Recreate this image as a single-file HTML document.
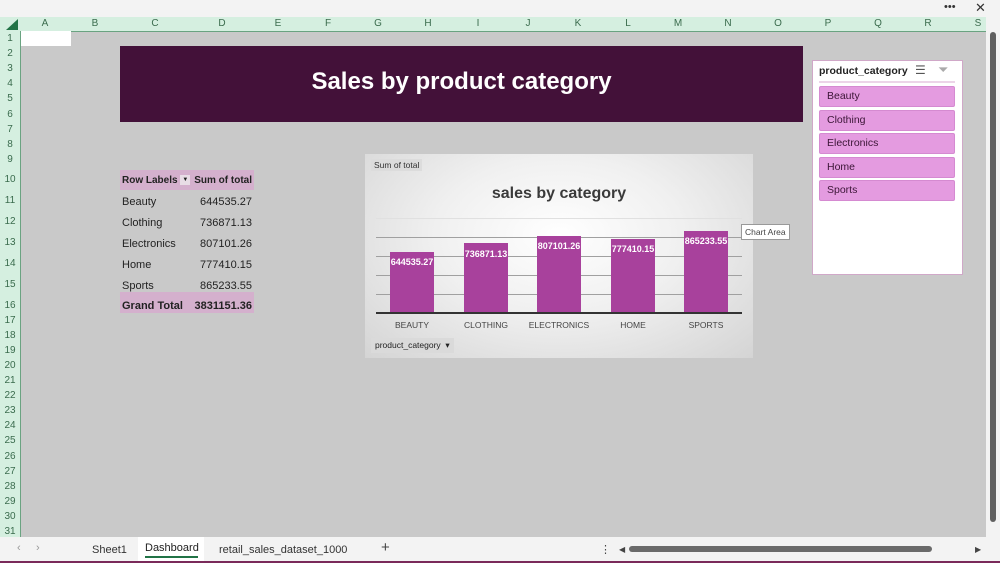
<!DOCTYPE html><html><head><style>
body{margin:0;width:1000px;height:563px;overflow:hidden;background:#c9c9c9;font-family:"Liberation Sans",sans-serif;position:relative}
.a{position:absolute}
.ch{position:absolute;top:17px;height:14px;font-size:10px;color:#3a6b4d;text-align:center;line-height:14px}
.rh{position:absolute;left:0;width:20px;font-size:10px;color:#3a6b4d;text-align:center}
.pv{position:absolute;left:122px;font-size:11px;color:#222;width:130px;display:flex;justify-content:space-between;white-space:nowrap}
.bar{position:absolute;background:#a8419c;width:44px;color:#fff;font-size:9px;font-weight:bold;text-align:center}
.xl{position:absolute;top:320px;font-size:8.5px;color:#444;width:80px;text-align:center}
.gl{position:absolute;left:376px;width:366px;height:1px;background:#a0a0a0}
.si{position:absolute;left:819px;width:127px;height:19px;background:#e49be0;border:1px solid #d58ad1;border-radius:2px;font-size:10.5px;color:#3b1536;padding-left:7px;line-height:19px}
</style></head><body>
<div class="a" style="left:0;top:0;width:1000px;height:17px;background:#f3f3f3"></div>
<div class="a" style="left:944px;top:1px;font-size:11px;color:#333">•••</div>
<div class="a" style="left:975px;top:0;font-size:13px;color:#333">✕</div>
<div class="a" style="left:0;top:17px;width:986px;height:14px;background:#d5efe0;border-bottom:1px solid #6aa381"></div>
<div class="a" style="left:0;top:31px;width:20px;height:506px;background:#d5efe0;border-right:1px solid #6aa381"></div>
<div class="a" style="left:6px;top:19px;width:0;height:0;border-left:12px solid transparent;border-bottom:11px solid #217346"></div>
<div class="ch" style="left:20px;width:50px">A</div><div class="ch" style="left:70px;width:50px">B</div><div class="ch" style="left:120px;width:70px">C</div><div class="ch" style="left:190px;width:64px">D</div><div class="ch" style="left:253px;width:50px">E</div><div class="ch" style="left:303px;width:50px">F</div><div class="ch" style="left:353px;width:50px">G</div><div class="ch" style="left:403px;width:50px">H</div><div class="ch" style="left:453px;width:50px">I</div><div class="ch" style="left:503px;width:50px">J</div><div class="ch" style="left:553px;width:50px">K</div><div class="ch" style="left:603px;width:50px">L</div><div class="ch" style="left:653px;width:50px">M</div><div class="ch" style="left:703px;width:50px">N</div><div class="ch" style="left:753px;width:50px">O</div><div class="ch" style="left:803px;width:50px">P</div><div class="ch" style="left:853px;width:50px">Q</div><div class="ch" style="left:903px;width:50px">R</div><div class="ch" style="left:953px;width:50px">S</div>
<div class="rh" style="top:33px">1</div><div class="rh" style="top:48px">2</div><div class="rh" style="top:63px">3</div><div class="rh" style="top:78px">4</div><div class="rh" style="top:93px">5</div><div class="rh" style="top:109px">6</div><div class="rh" style="top:124px">7</div><div class="rh" style="top:139px">8</div><div class="rh" style="top:154px">9</div><div class="rh" style="top:174px">10</div><div class="rh" style="top:195px">11</div><div class="rh" style="top:216px">12</div><div class="rh" style="top:237px">13</div><div class="rh" style="top:258px">14</div><div class="rh" style="top:279px">15</div><div class="rh" style="top:300px">16</div><div class="rh" style="top:315px">17</div><div class="rh" style="top:330px">18</div><div class="rh" style="top:345px">19</div><div class="rh" style="top:360px">20</div><div class="rh" style="top:375px">21</div><div class="rh" style="top:390px">22</div><div class="rh" style="top:405px">23</div><div class="rh" style="top:420px">24</div><div class="rh" style="top:435px">25</div><div class="rh" style="top:451px">26</div><div class="rh" style="top:466px">27</div><div class="rh" style="top:481px">28</div><div class="rh" style="top:496px">29</div><div class="rh" style="top:511px">30</div><div class="rh" style="top:526px">31</div>
<div class="a" style="left:21px;top:31px;width:50px;height:15px;background:#fff"></div>
<div class="a" style="left:986px;top:17px;width:14px;height:520px;background:#f3f3f3"></div>
<div class="a" style="left:990px;top:32px;width:6px;height:490px;background:#606060;border-radius:3px"></div>
<div class="a" style="left:120px;top:46px;width:683px;height:76px;background:#431139;color:#fff;font-size:24px;font-weight:bold;text-align:center;line-height:72px">Sales by product category</div>
<div class="a" style="left:120px;top:170px;width:134px;height:20px;background:#d4b0cd"></div>
<div class="a" style="left:120px;top:292px;width:134px;height:21px;background:#d4b0cd"></div>
<div class="pv" style="top:175px;font-weight:bold;font-size:10px"><span>Row Labels <span style="display:inline-block;width:10px;height:10px;background:#e8dde6;font-size:6px;text-align:center;vertical-align:middle;line-height:10px">▼</span></span><span>Sum of total</span></div>
<div class="pv" style="top:196px"><span>Beauty</span><span>644535.27</span></div>
<div class="pv" style="top:217px"><span>Clothing</span><span>736871.13</span></div>
<div class="pv" style="top:238px"><span>Electronics</span><span>807101.26</span></div>
<div class="pv" style="top:259px"><span>Home</span><span>777410.15</span></div>
<div class="pv" style="top:280px"><span>Sports</span><span>865233.55</span></div>
<div class="pv" style="top:300px;font-weight:bold"><span>Grand Total</span><span>3831151.36</span></div>
<div class="a" style="left:365px;top:154px;width:388px;height:204px;background:radial-gradient(ellipse at 50% 40%,#fff 0%,#f0f0f0 45%,#d4d4d4 100%)"></div>
<div class="a" style="left:371px;top:159px;padding:1px 3px;background:#dcdcdc;font-size:8.5px;color:#333">Sum of total</div>
<div class="a" style="left:365px;top:185px;width:388px;text-align:center;font-size:16px;font-weight:bold;color:#3a3a3a">sales by category</div>
<div class="gl" style="top:218px;background:#e0e0e0"></div><div class="gl" style="top:237px"></div><div class="gl" style="top:256px"></div><div class="gl" style="top:275px"></div><div class="gl" style="top:294px"></div>
<div class="bar" style="left:390px;top:252px;height:61px;padding-top:5px;box-sizing:border-box">644535.27</div>
<div class="bar" style="left:464px;top:243px;height:70px;padding-top:6px;box-sizing:border-box">736871.13</div>
<div class="bar" style="left:537px;top:236px;height:77px;padding-top:5px;box-sizing:border-box">807101.26</div>
<div class="bar" style="left:611px;top:239px;height:74px;padding-top:5px;box-sizing:border-box">777410.15</div>
<div class="bar" style="left:684px;top:231px;height:82px;padding-top:5px;box-sizing:border-box">865233.55</div>
<div class="a" style="left:376px;top:312px;width:366px;height:2px;background:#333"></div>
<div class="xl" style="left:372px">BEAUTY</div><div class="xl" style="left:446px">CLOTHING</div><div class="xl" style="left:519px">ELECTRONICS</div><div class="xl" style="left:593px">HOME</div><div class="xl" style="left:666px">SPORTS</div>
<div class="a" style="left:371px;top:338px;padding:2px 4px;background:#dadada;font-size:8.5px;color:#222">product_category &nbsp;▾</div>
<div class="a" style="left:741px;top:224px;padding:2px 3px;background:#fff;border:1px solid #999;font-size:8.5px;color:#444">Chart Area</div>
<div class="a" style="left:812px;top:60px;width:149px;height:213px;background:#fff;border:1px solid #d0a8c8"></div>
<div class="a" style="left:819px;top:65px;font-size:10.5px;font-weight:bold;color:#222">product_category</div>
<div class="a" style="left:915px;top:63px;font-size:12px;color:#555">☰</div>
<div class="a" style="left:938px;top:62px;font-size:13px;color:#aaa">⏷</div>
<div class="a" style="left:819px;top:81px;width:136px;height:2px;background:#ecd4e8"></div>
<div class="si" style="top:86px">Beauty</div><div class="si" style="top:110px">Clothing</div><div class="si" style="top:133px">Electronics</div><div class="si" style="top:157px">Home</div><div class="si" style="top:180px">Sports</div>
<div class="a" style="left:0;top:537px;width:1000px;height:26px;background:#f3f3f3"></div>
<div class="a" style="left:17px;top:542px;font-size:11px;color:#999">‹ &nbsp;&nbsp;&nbsp; ›</div>
<div class="a" style="left:92px;top:544px;font-size:11px;color:#333">Sheet1</div>
<div class="a" style="left:138px;top:537px;width:66px;height:24px;background:#fff"></div>
<div class="a" style="left:145px;top:542px;font-size:11px;color:#222">Dashboard</div>
<div class="a" style="left:145px;top:556px;width:53px;height:2px;background:#217346"></div>
<div class="a" style="left:219px;top:544px;font-size:11px;color:#333">retail_sales_dataset_1000</div>
<div class="a" style="left:381px;top:539px;font-size:15px;color:#444">+</div>
<div class="a" style="left:600px;top:543px;font-size:11px;color:#444">⋮</div>
<div class="a" style="left:619px;top:545px;font-size:8px;color:#444">◀</div>
<div class="a" style="left:629px;top:546px;width:303px;height:6px;background:#6a6a6a;border-radius:3px"></div>
<div class="a" style="left:975px;top:545px;font-size:8px;color:#444">▶</div>
<div class="a" style="left:0;top:561px;width:1000px;height:2px;background:#7a2a5a"></div>
</body></html>
